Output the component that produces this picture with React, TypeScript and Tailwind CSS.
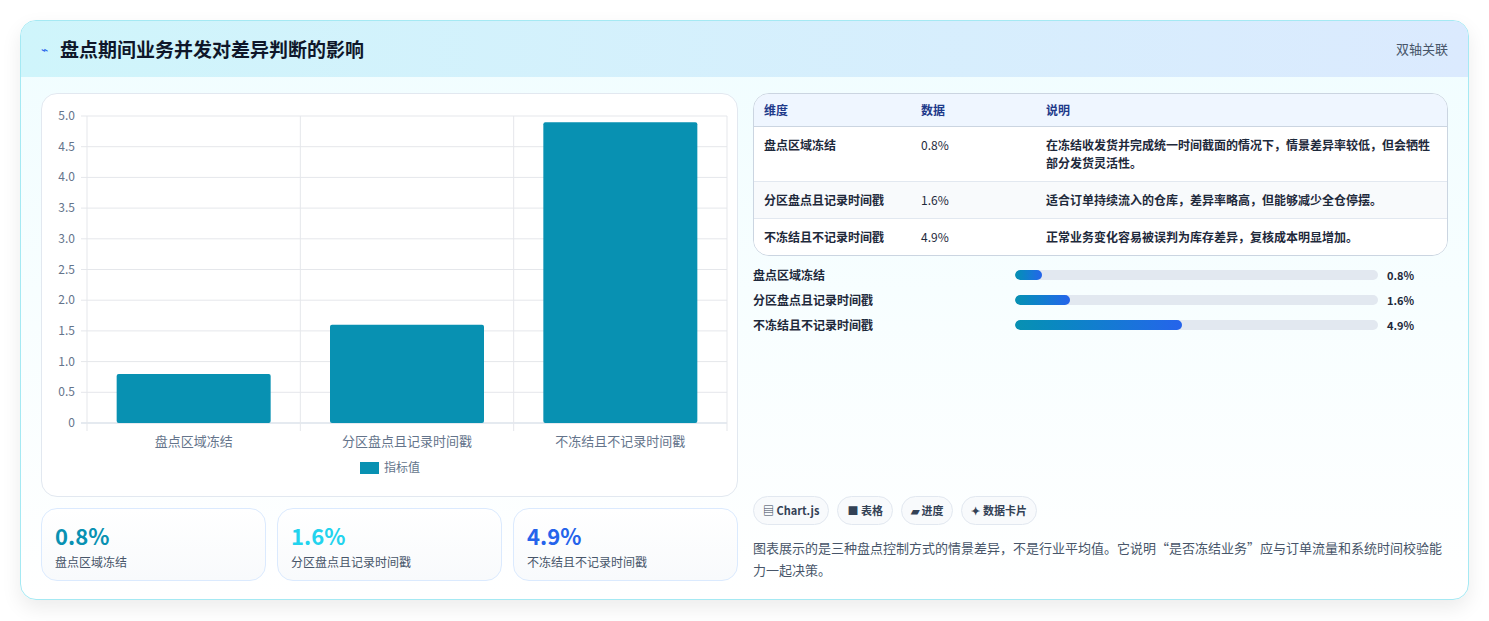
import React from "react";

const rows = [
  { name: "盘点区域冻结", value: 0.8, note: "在冻结收发货并完成统一时间截面的情况下，情景差异率较低，但会牺牲部分发货灵活性。" },
  { name: "分区盘点且记录时间戳", value: 1.6, note: "适合订单持续流入的仓库，差异率略高，但能够减少全仓停摆。" },
  { name: "不冻结且不记录时间戳", value: 4.9, note: "正常业务变化容易被误判为库存差异，复核成本明显增加。" },
];

const font = { fontFamily: '"Noto Sans CJK SC", "Noto Sans", sans-serif' };

function Chart() {
  const x0 = 45, x1 = 685, yTop = 22, yBot = 329;
  const h = yBot - yTop;
  const ticks = [0, 0.5, 1, 1.5, 2, 2.5, 3, 3.5, 4, 4.5, 5];
  const cw = (x1 - x0) / 3;
  return (
    <svg width="697" height="402" className="block">
      {ticks.map((t) => {
        const y = yBot - (t / 5) * h;
        return (
          <g key={t}>
            <line x1={x0 - 6} x2={x1} y1={y} y2={y} stroke={t === 0 ? "#cbd5e1" : "#e5e7eb"} />
            <text x={x0 - 12} y={y + 4} textAnchor="end" fontSize="12" fill="#64748b" style={font}>
              {t === 0 ? "0" : t.toFixed(1)}
            </text>
          </g>
        );
      })}
      {[0, 1, 2, 3].map((i) => (
        <line key={i} x1={x0 + i * cw} x2={x0 + i * cw} y1={yTop} y2={yBot + 8} stroke="#e5e7eb" />
      ))}
      {rows.map((r, i) => {
        const bh = (r.value / 5) * h;
        const cx = x0 + i * cw + cw / 2;
        return (
          <g key={r.name}>
            <rect x={cx - 77} y={yBot - bh} width="154" height={bh} fill="#0891b2" rx="2" />
            <text x={cx} y={yBot + 23} textAnchor="middle" fontSize="13" fill="#64748b" style={font}>{r.name}</text>
          </g>
        );
      })}
      <rect x="318" y="368" width="19" height="12" fill="#0891b2" />
      <text x="342" y="378" fontSize="12" fill="#64748b" style={font}>指标值</text>
    </svg>
  );
}

export default function App() {
  const colors = ["text-[#0891b2]", "text-[#22d3ee]", "text-[#2563eb]"];
  return (
    <div className="w-[1489px] h-[621px] bg-white pt-5 px-5" style={font}>
      <div className="rounded-2xl border border-[#a5e9f3] bg-gradient-to-b from-[#f0fdff] to-white shadow-[0_8px_20px_rgba(0,0,0,0.08)] overflow-hidden">
        <div className="h-[56px] flex items-center justify-between px-5 bg-gradient-to-r from-[#cff5fb] to-[#dbeafe]">
          <div className="flex items-center gap-3">
            <span className="text-[#2563eb] text-xs">⌁</span>
            <span className="text-[19px] font-bold text-[#0f172a]">盘点期间业务并发对差异判断的影响</span>
          </div>
          <span className="text-[13px] text-[#475569]">双轴关联</span>
        </div>
        <div className="flex gap-[15px] px-5 pt-4 pb-[18px]">
          <div className="w-[697px] flex flex-col gap-[11px]">
            <div className="h-[404px] rounded-2xl border border-[#e2e8f0] bg-white">
              <Chart />
            </div>
            <div className="grid grid-cols-3 gap-[11px]">
              {rows.map((r, i) => (
                <div key={r.name} className="h-[73px] rounded-2xl border border-[#dbeafe] bg-gradient-to-b from-white to-[#f8fafc] px-[13px] pt-[12px]">
                  <div className={`text-[22px] font-bold leading-[28px] ${colors[i]}`}>{r.value}%</div>
                  <div className="text-[12px] text-[#475569] mt-[4px]">{r.name}</div>
                </div>
              ))}
            </div>
          </div>
          <div className="w-[697px] flex flex-col">
            <div className="rounded-2xl border border-[#cbd5e1] overflow-hidden bg-white text-[12px] text-[#1e293b]">
              <div className="flex h-[33px] items-center bg-[#eff6ff] border-b border-[#cbd5e1] text-[#1e3a8a] font-semibold">
                <div className="w-[167px] pl-[10px]">维度</div>
                <div className="w-[125px]">数据</div>
                <div className="flex-1">说明</div>
              </div>
              {rows.map((r, i) => (
                <div key={r.name} className={`flex py-[9px] leading-[18px] ${i === 1 ? "bg-[#f8fafc]" : "bg-white"} ${i < 2 ? "border-b border-[#e2e8f0]" : ""}`}>
                  <div className="w-[167px] pl-[10px] font-semibold">{r.name}</div>
                  <div className="w-[125px]">{r.value}%</div>
                  <div className="flex-1 pr-3 font-semibold">{r.note}</div>
                </div>
              ))}
            </div>
            <div className="mt-[10px] flex flex-col gap-[7px] text-[12px] font-semibold text-[#1e293b]">
              {rows.map((r) => (
                <div key={r.name} className="flex items-center h-[18px]">
                  <div className="w-[262px]">{r.name}</div>
                  <div className="w-[363px] h-[10px] rounded-full bg-[#e2e8f0] overflow-hidden">
                    <div className="h-full rounded-full bg-gradient-to-r from-[#0891b2] to-[#2563eb]" style={{ width: `${(r.value / 5) * 47}%` }} />
                  </div>
                  <div className="ml-[9px] text-[11px] font-bold">{r.value}%</div>
                </div>
              ))}
            </div>
            <div className="flex-1" />
            <div className="flex gap-2 text-[11px] font-semibold text-[#334155]">
              {["▤ Chart.js", "■ 表格", "▰ 进度", "✦ 数据卡片"].map((c) => (
                <span key={c} className="h-[29px] px-[9px] flex items-center rounded-full border border-[#e2e8f0] bg-[#f8fafc]">{c}</span>
              ))}
            </div>
            <p className="mt-[12px] text-[13px] leading-[22px] text-[#475569]">
              图表展示的是三种盘点控制方式的情景差异，不是行业平均值。它说明“是否冻结业务”应与订单流量和系统时间校验能力一起决策。
            </p>
          </div>
        </div>
      </div>
    </div>
  );
}
